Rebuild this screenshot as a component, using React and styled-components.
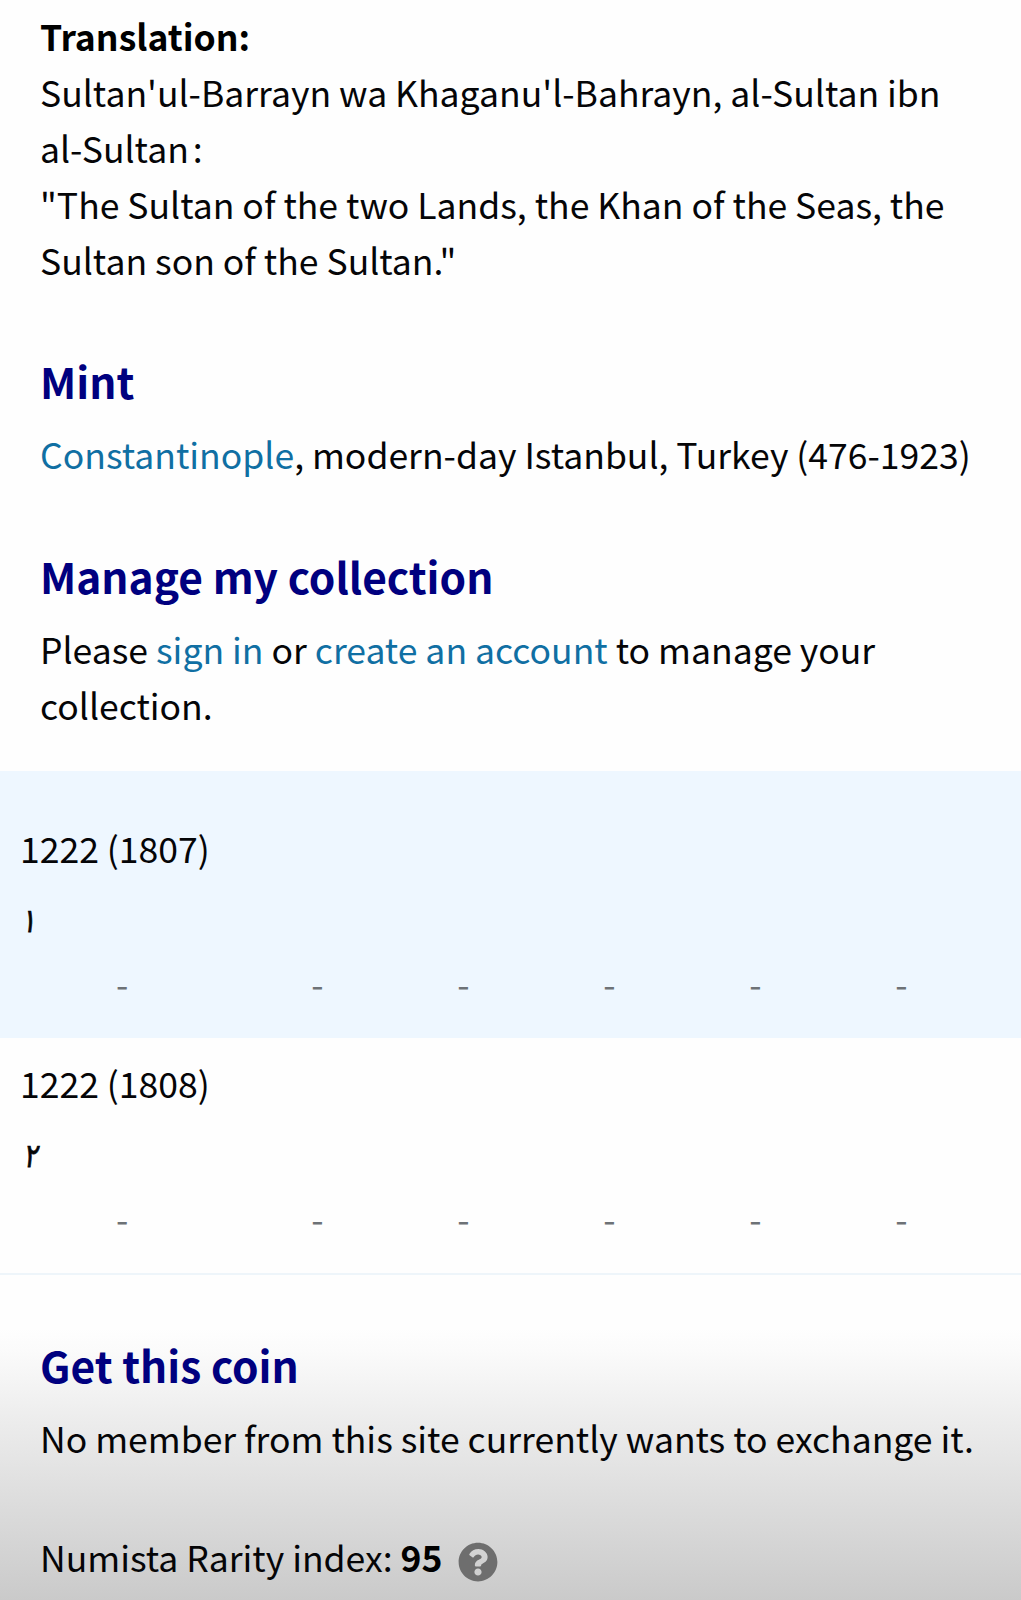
import React from "react";
import styled, { createGlobalStyle } from "styled-components";
import { FaQuestionCircle } from "react-icons/fa";

const Global = createGlobalStyle`
  html, body { margin: 0; padding: 0; background: #fff; }
`;

const Page = styled.main`
  box-sizing: border-box;
  width: 1021px;
  height: 1600px;
  overflow: hidden;
  padding-top: 8px;
  display: flex;
  flex-direction: column;
  font-family: "Noto Sans CJK SC", "Noto Sans", sans-serif;
  font-size: 35.54px;
  line-height: 56px;
  color: #050507;
  background: linear-gradient(
    to bottom,
    #fefefe 1328px,
    #fbfbfb 1350px,
    #ededed 1417px,
    #dddddd 1500px,
    #cacaca 1600px
  );
`;

const Section = styled.section`
  padding: 0 40px;
  margin-top: ${(p) => p.$gap}px;
`;

const Line = styled.p`
  margin: 0;
  white-space: nowrap;
`;

const Label = styled.strong`
  font-weight: 700;
  color: #000;
`;

const Colon = styled.span`
  margin-left: 4px;
`;

const Heading = styled.h3`
  margin: 0 0 12px;
  font-size: 42.5px;
  line-height: 66px;
  font-weight: 700;
  color: #00007f;
`;

const Link = styled.a`
  color: #106fa3;
  text-decoration: none;
`;

const Table = styled.div`
  margin-top: 38px;
`;

const YearRow = styled.div`
  box-sizing: border-box;
  height: ${(p) => p.$height}px;
  padding-top: ${(p) => p.$top}px;
  background: ${(p) => (p.$tinted ? "#eef7ff" : "transparent")};
  border-bottom: ${(p) => (p.$tinted ? "0" : "2px solid #eef5fa")};
`;

const Year = styled.div`
  padding-left: 20px;
`;

const Numeral = styled.div`
  width: 24px;
  margin: 17px 0 0 ${(p) => p.$indent}px;
  height: 53px;
  font-family: "DejaVu Sans", sans-serif;
  font-size: 33px;
  transform: skewX(-8deg) scaleX(0.8);
  -webkit-text-stroke: 0.8px #050507;
`;

const Grades = styled.div`
  display: grid;
  grid-template-columns: 244.5px repeat(5, 146px);
  color: #6d7276;
  margin-top: 9px;
`;

const Grade = styled.span`
  text-align: center;
`;

const Rarity = styled.div`
  display: flex;
  align-items: center;
  white-space: nowrap;
  gap: 16px;
  margin-top: 63px;
`;

const HelpIcon = styled(FaQuestionCircle)`
  width: 40px;
  height: 40px;
  margin-top: 10px;
  color: #6e6e6e;
`;

function Coin({ year, numeral, indent, tinted, height, top }) {
  return (
    <YearRow $tinted={tinted} $height={height} $top={top}>
      <Year>{year}</Year>
      <Numeral $indent={indent}>{numeral}</Numeral>
      <Grades>
        {[0, 1, 2, 3, 4, 5].map((g) => (
          <Grade key={g}>-</Grade>
        ))}
      </Grades>
    </YearRow>
  );
}

export default function App() {
  return (
    <Page>
      <Global />
      <Section $gap={0}>
        <Line><Label>Translation:</Label></Line>
        <Line>Sultan'ul-Barrayn wa Khaganu'l-Bahrayn, al-Sultan ibn</Line>
        <Line>al-Sultan<Colon>:</Colon></Line>
        <Line>"The Sultan of the two Lands, the Khan of the Seas, the</Line>
        <Line>Sultan son of the Sultan."</Line>
      </Section>
      <Section $gap={60}>
        <Heading>Mint</Heading>
        <Line><Link>Constantinople</Link>, modern-day Istanbul, Turkey (476-1923)</Line>
      </Section>
      <Section $gap={61}>
        <Heading>Manage my collection</Heading>
        <Line>Please <Link>sign in</Link> or <Link>create an account</Link> to manage your</Line>
        <Line>collection.</Line>
      </Section>
      <Table>
        <Coin tinted height={267} top={49} indent={21} year="1222 (1807)" numeral="۱" />
        <Coin height={237} top={17} indent={23} year="1222 (1808)" numeral="۲" />
      </Table>
      <Section $gap={57}>
        <Heading>Get this coin</Heading>
        <Line>No member from this site currently wants to exchange it.</Line>
        <Rarity>
          <span>Numista Rarity index: <Label>95</Label></span>
          <HelpIcon />
        </Rarity>
      </Section>
    </Page>
  );
}
